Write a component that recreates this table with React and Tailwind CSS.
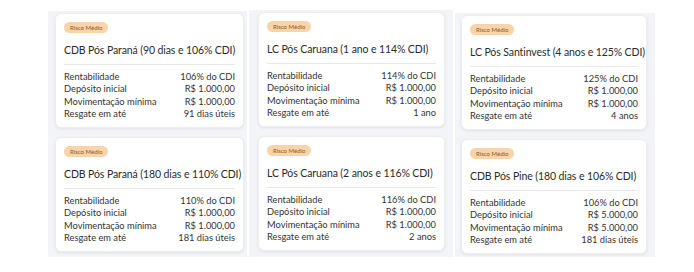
import React from "react";

const columns = [
  {
    offset: "mt-[11px]",
    pad: "pl-[7px] w-[199px]",
    cardW: "w-[189px]",
    cards: [
      {
        title: "CDB Pós Paraná (90 dias e 106% CDI)",
        rent: "106% do CDI",
        dep: "R$ 1.000,00",
        mov: "R$ 1.000,00",
        resg: "91 dias úteis",
      },
      {
        title: "CDB Pós Paraná (180 dias e 110% CDI)",
        rent: "110% do CDI",
        dep: "R$ 1.000,00",
        mov: "R$ 1.000,00",
        resg: "181 dias úteis",
      },
    ],
  },
  {
    offset: "mt-[10px]",
    pad: "pl-[9px] w-[204px]",
    cardW: "w-[187px]",
    cards: [
      {
        title: "LC Pós Caruana (1 ano e 114% CDI)",
        rent: "114% do CDI",
        dep: "R$ 1.000,00",
        mov: "R$ 1.000,00",
        resg: "1 ano",
      },
      {
        title: "LC Pós Caruana (2 anos e 116% CDI)",
        rent: "116% do CDI",
        dep: "R$ 1.000,00",
        mov: "R$ 1.000,00",
        resg: "2 anos",
      },
    ],
  },
  {
    offset: "mt-[13px]",
    pad: "pl-[6px] w-[200px]",
    cardW: "w-[186px]",
    cards: [
      {
        title: "LC Pós Santinvest (4 anos e 125% CDI)",
        rent: "125% do CDI",
        dep: "R$ 1.000,00",
        mov: "R$ 1.000,00",
        resg: "4 anos",
      },
      {
        title: "CDB Pós Pine (180 dias e 106% CDI)",
        rent: "106% do CDI",
        dep: "R$ 5.000,00",
        mov: "R$ 5.000,00",
        resg: "181 dias úteis",
      },
    ],
  },
];

const Row = ({ label, value }) => (
  <div className="flex justify-between h-[12.5px] items-center">
    <span>{label}</span>
    <span>{value}</span>
  </div>
);

const Card = ({ card, width }) => (
  <div
    className={`${width} rounded-md bg-white px-[8px] pt-[8px] pb-[7px] shadow-[0_1px_3px_rgba(0,0,0,0.08)] border border-[#eceef2]`}
  >
    <div className="flex">
      <span className="flex h-[11px] items-center rounded-full bg-[#f8d4a8] px-[6px] text-[6px] leading-none text-[#8b5a2b]">
        Risco Médio
      </span>
    </div>
    <h3 className="mt-[9px] text-[10.5px] tracking-[-0.1px] leading-[16px] text-[#2b2b2b] whitespace-nowrap">
      {card.title}
    </h3>
    <div className="mt-[6px] border-t border-[#e6e8ec]" />
    <div className="mt-[5px] text-[9.3px] leading-none text-[#333]">
      <Row label="Rentabilidade" value={card.rent} />
      <Row label="Depósito inicial" value={card.dep} />
      <Row label="Movimentação mínima" value={card.mov} />
      <Row label="Resgate em até" value={card.resg} />
    </div>
  </div>
);

export default function App() {
  return (
    <div
      className="w-[694px] h-[272px] bg-white flex gap-[2px] pl-[48px] items-stretch pb-[15px]"
      style={{ fontFamily: "Lato, 'Noto Sans', sans-serif" }}
    >
      {columns.map((col, i) => (
        <div
          key={i}
          className={`${col.offset} ${col.pad} bg-[#f3f4f7] flex flex-col items-start gap-[9px] pt-[2px]`}
        >
          {col.cards.map((card, j) => (
            <Card key={j} card={card} width={col.cardW} />
          ))}
        </div>
      ))}
    </div>
  );
}
